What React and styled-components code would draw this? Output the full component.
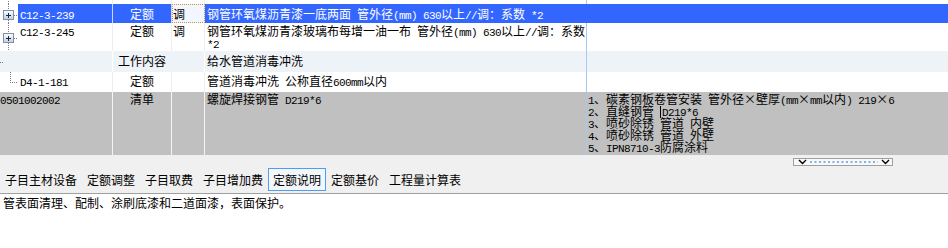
import React from "react";
import styled, { createGlobalStyle } from "styled-components";

const GlobalStyle = createGlobalStyle`
  html, body { margin: 0; padding: 0; background: #fff; }
  body {
    font-family: "Noto Sans CJK SC", "Noto Sans", sans-serif;
    font-size: 12px;
    color: #000;
  }
  #root { width: 948px; height: 248px; overflow: hidden; }
`;

const COLS = "18px 95px 59px 33px 382px 1fr";

const Page = styled.div`
  display: flex;
  flex-direction: column;
  width: 948px;
  height: 248px;
`;

const Table = styled.div`
  display: flex;
  flex-direction: column;
`;

const Cell = styled.div`
  box-sizing: border-box;
  padding-left: ${(p) => p.$pl ?? 2}px;
  border-right: 1px solid ${(p) => p.$line || "#eceef1"};
  text-align: left;
  white-space: nowrap;
  grid-column: span ${(p) => p.$span || 1};
`;

const CenterCell = styled(Cell)`
  padding-left: 0;
  text-align: center;
`;

const FocusCell = styled(Cell)`
  background: #f2f6ff;
  color: #000;
  outline: 1px dotted #d0913a;
  outline-offset: -1px;
`;

const TreeCell = styled.div`
  background: ${(p) => p.$bg || "transparent"};
  line-height: 0;
  overflow: hidden;
`;

const Row = styled.div`
  display: grid;
  grid-template-columns: ${COLS};
  height: ${(p) => p.$h}px;
  background: ${(p) => p.$bg || "#fff"};
  color: ${(p) => p.$fg || "#000"};
  line-height: 12px;

  & > ${Cell} {
    padding-top: ${(p) => p.$pt || 0}px;
  }
`;

const Mono = styled.span`
  font-family: "Liberation Mono", "DejaVu Sans Mono", monospace;
  font-size: 11px;
  letter-spacing: -0.6px;
  line-height: 0;
`;

const Caret = styled.span`
  display: inline-block;
  width: 1px;
  height: 12px;
  background: #000;
  vertical-align: -2px;
  margin-right: 1px;
  line-height: 0;
`;

const Lines = styled.div`
  display: flex;
  flex-direction: column;
`;

const Line = styled.div`
  height: 12px;
  line-height: 12px;
`;

const Lower = styled.div`
  background: #f0f0f0;
  display: flex;
  flex-direction: column;
`;

const ScrollRow = styled.div`
  height: 13px;
  box-sizing: border-box;
  padding-top: 3px;
  padding-right: 55px;
  display: flex;
  justify-content: flex-end;
  align-items: flex-start;
`;

const ScrollBox = styled.div`
  width: 100px;
  height: 8px;
  box-sizing: border-box;
  border: 1px solid #a0a0a0;
  background: #f8f8f8;
  line-height: 0;
`;

const TabBar = styled.div`
  height: 25px;
  border-bottom: 1px solid #a0a0a0;
  display: flex;
  align-items: flex-start;
`;

const Tab = styled.div`
  height: 23px;
  box-sizing: border-box;
  padding: 0 4px;
  border: 1px solid ${(p) => (p.$active ? "#4a9ff0" : "transparent")};
  background: ${(p) => (p.$active ? "#f3f7fc" : "transparent")};
  line-height: 21px;
  font-size: 12px;
  color: #000;
  white-space: nowrap;
`;

const Content = styled.div`
  flex: 1;
  background: #fff;
  padding: 1px 3px;
  line-height: 16px;
  font-size: 12px;
`;

const DOT = "#7a7a7a";

const VDots = ({ x, y1, y2 }) => (
  <line x1={x} y1={y1} x2={x} y2={y2} stroke={DOT} strokeDasharray="1 1" />
);
const HDots = ({ y, x1, x2 }) => (
  <line x1={x1} y1={y} x2={x2} y2={y} stroke={DOT} strokeDasharray="1 1" />
);

const PlusBox = ({ y }) => (
  <g shapeRendering="crispEdges">
    <defs>
      <linearGradient id={`pb${y}`} x1="0" y1="0" x2="0" y2="1">
        <stop offset="0" stopColor="#ffffff" />
        <stop offset="1" stopColor="#c3cddb" />
      </linearGradient>
    </defs>
    <rect x="3.5" y={y + 0.5} width="10" height="9" fill={`url(#pb${y})`} stroke="#7d90a8" />
    <line x1="6" y1={y + 5.5} x2="11" y2={y + 5.5} stroke="#102850" />
    <line x1="8.5" y1={y + 3} x2="8.5" y2={y + 8} stroke="#102850" />
  </g>
);

const Tree = ({ h, children, bg }) => (
  <TreeCell $bg={bg}>
    <svg width="18" height={h} viewBox={`0 0 18 ${h}`}>
      {children}
    </svg>
  </TreeCell>
);

const SEL = "#3366ff";
const SEP_BLUE = "#a6c9f2";

export default function App() {
  return (
    <>
      <GlobalStyle />
      <Page>
        <Table>
          <Row $h={4}>
            <Tree h={4}>
              <VDots x={8.5} y1={0} y2={4} />
            </Tree>
            <Cell />
            <Cell />
            <Cell />
            <Cell $line={SEP_BLUE} />
            <Cell $line="transparent" />
          </Row>

          <Row $h={19} $bg={SEL} $fg="#fff" $pt={4}>
            <Tree h={19} bg="#fff">
              <VDots x={8.5} y1={0} y2={6} />
              <PlusBox y={6} />
              <HDots y={11.5} x1={14} x2={18} />
              <VDots x={8.5} y1={16} y2={19} />
            </Tree>
            <Cell $line="#c9d6ff">
              <Mono>C12-3-239</Mono>
            </Cell>
            <CenterCell $line="#c9d6ff">定额</CenterCell>
            <FocusCell $pl={1}>调</FocusCell>
            <Cell $line={SEL}>
              钢管环氧煤沥青漆一底两面<Mono> </Mono>管外径<Mono>(mm) 630</Mono>以上
              <Mono>//</Mono>调：系数<Mono> *2</Mono>
            </Cell>
            <Cell $line="transparent" />
          </Row>

          <Row $h={28} $pt={2}>
            <Tree h={28}>
              <VDots x={8.5} y1={0} y2={10} />
              <PlusBox y={10} />
              <HDots y={15.5} x1={14} x2={18} />
              <VDots x={8.5} y1={20} y2={28} />
            </Tree>
            <Cell>
              <Mono>C12-3-245</Mono>
            </Cell>
            <CenterCell>定额</CenterCell>
            <Cell $pl={1}>调</Cell>
            <Cell $line={SEP_BLUE}>
              <Lines>
                <Line>
                  钢管环氧煤沥青漆玻璃布每增一油一布<Mono> </Mono>管外径<Mono>(mm) 630</Mono>以上
                  <Mono>//</Mono>调：系数
                </Line>
                <Line>
                  <Mono>*2</Mono>
                </Line>
              </Lines>
            </Cell>
            <Cell $line="transparent" />
          </Row>

          <Row $h={21} $bg="#eef3f8" $pt={4}>
            <Tree h={21}>
              <HDots y={11.5} x1={0} x2={3} />
            </Tree>
            <Cell $line="#ffffff" />
            <CenterCell $line="transparent">工作内容</CenterCell>
            <Cell $line="#ffffff" />
            <Cell $line={SEP_BLUE}>给水管道消毒冲洗</Cell>
            <Cell $line="transparent" />
          </Row>

          <Row $h={20} $pt={3}>
            <Tree h={20}>
              <VDots x={10.5} y1={0} y2={10} />
              <HDots y={10.5} x1={10} x2={18} />
            </Tree>
            <Cell>
              <Mono>D4-1-181</Mono>
            </Cell>
            <CenterCell>定额</CenterCell>
            <Cell $pl={1} />
            <Cell $line={SEP_BLUE}>
              管道消毒冲洗<Mono> </Mono>公称直径<Mono>600mm</Mono>以内
            </Cell>
            <Cell $line="transparent" />
          </Row>

          <Row $h={63} $bg="#c0c0c0" $pt={1}>
            <Cell $span={2} $pl={0} $line="#f4f4f4">
              <Mono>0501002002</Mono>
            </Cell>
            <CenterCell $line="#f4f4f4">清单</CenterCell>
            <Cell $line="#f4f4f4" />
            <Cell $line={SEP_BLUE}>
              螺旋焊接钢管<Mono> D219*6</Mono>
            </Cell>
            <Cell $pl={1} $line="transparent">
              <Lines>
                <Line>
                  <Mono>1</Mono>、碳素钢板卷管安装<Mono> </Mono>管外径×壁厚<Mono>(mm</Mono>×
                  <Mono>mm</Mono>以内<Mono>) 219</Mono>×<Mono>6</Mono>
                </Line>
                <Line>
                  <Mono>2</Mono>、直缝钢管<Mono> </Mono>
                  <Caret />
                  <Mono>D219*6</Mono>
                </Line>
                <Line>
                  <Mono>3</Mono>、喷砂除锈<Mono> </Mono>管道<Mono> </Mono>内壁
                </Line>
                <Line>
                  <Mono>4</Mono>、喷砂除锈<Mono> </Mono>管道<Mono> </Mono>外壁
                </Line>
                <Line>
                  <Mono>5</Mono>、<Mono>IPN8710-3</Mono>防腐涂料
                </Line>
              </Lines>
            </Cell>
          </Row>
        </Table>

        <Lower>
          <ScrollRow>
            <ScrollBox>
              <svg width="98" height="6" viewBox="0 0 98 6">
                <polyline points="5,1 8.5,4.5 12,1" fill="none" stroke="#000" strokeWidth="1.4" />
                <line x1="16" y1="3" x2="84" y2="3" stroke="#5a9be6" strokeWidth="1.5" strokeDasharray="2 2.5" />
                <polyline points="88,1 91.5,4.5 95,1" fill="none" stroke="#000" strokeWidth="1.4" />
              </svg>
            </ScrollBox>
          </ScrollRow>
          <TabBar>
            <Tab>子目主材设备</Tab>
            <Tab>定额调整</Tab>
            <Tab>子目取费</Tab>
            <Tab>子目增加费</Tab>
            <Tab $active>定额说明</Tab>
            <Tab>定额基价</Tab>
            <Tab>工程量计算表</Tab>
          </TabBar>
        </Lower>
        <Content>管表面清理、配制、涂刷底漆和二道面漆，表面保护。</Content>
      </Page>
    </>
  );
}
